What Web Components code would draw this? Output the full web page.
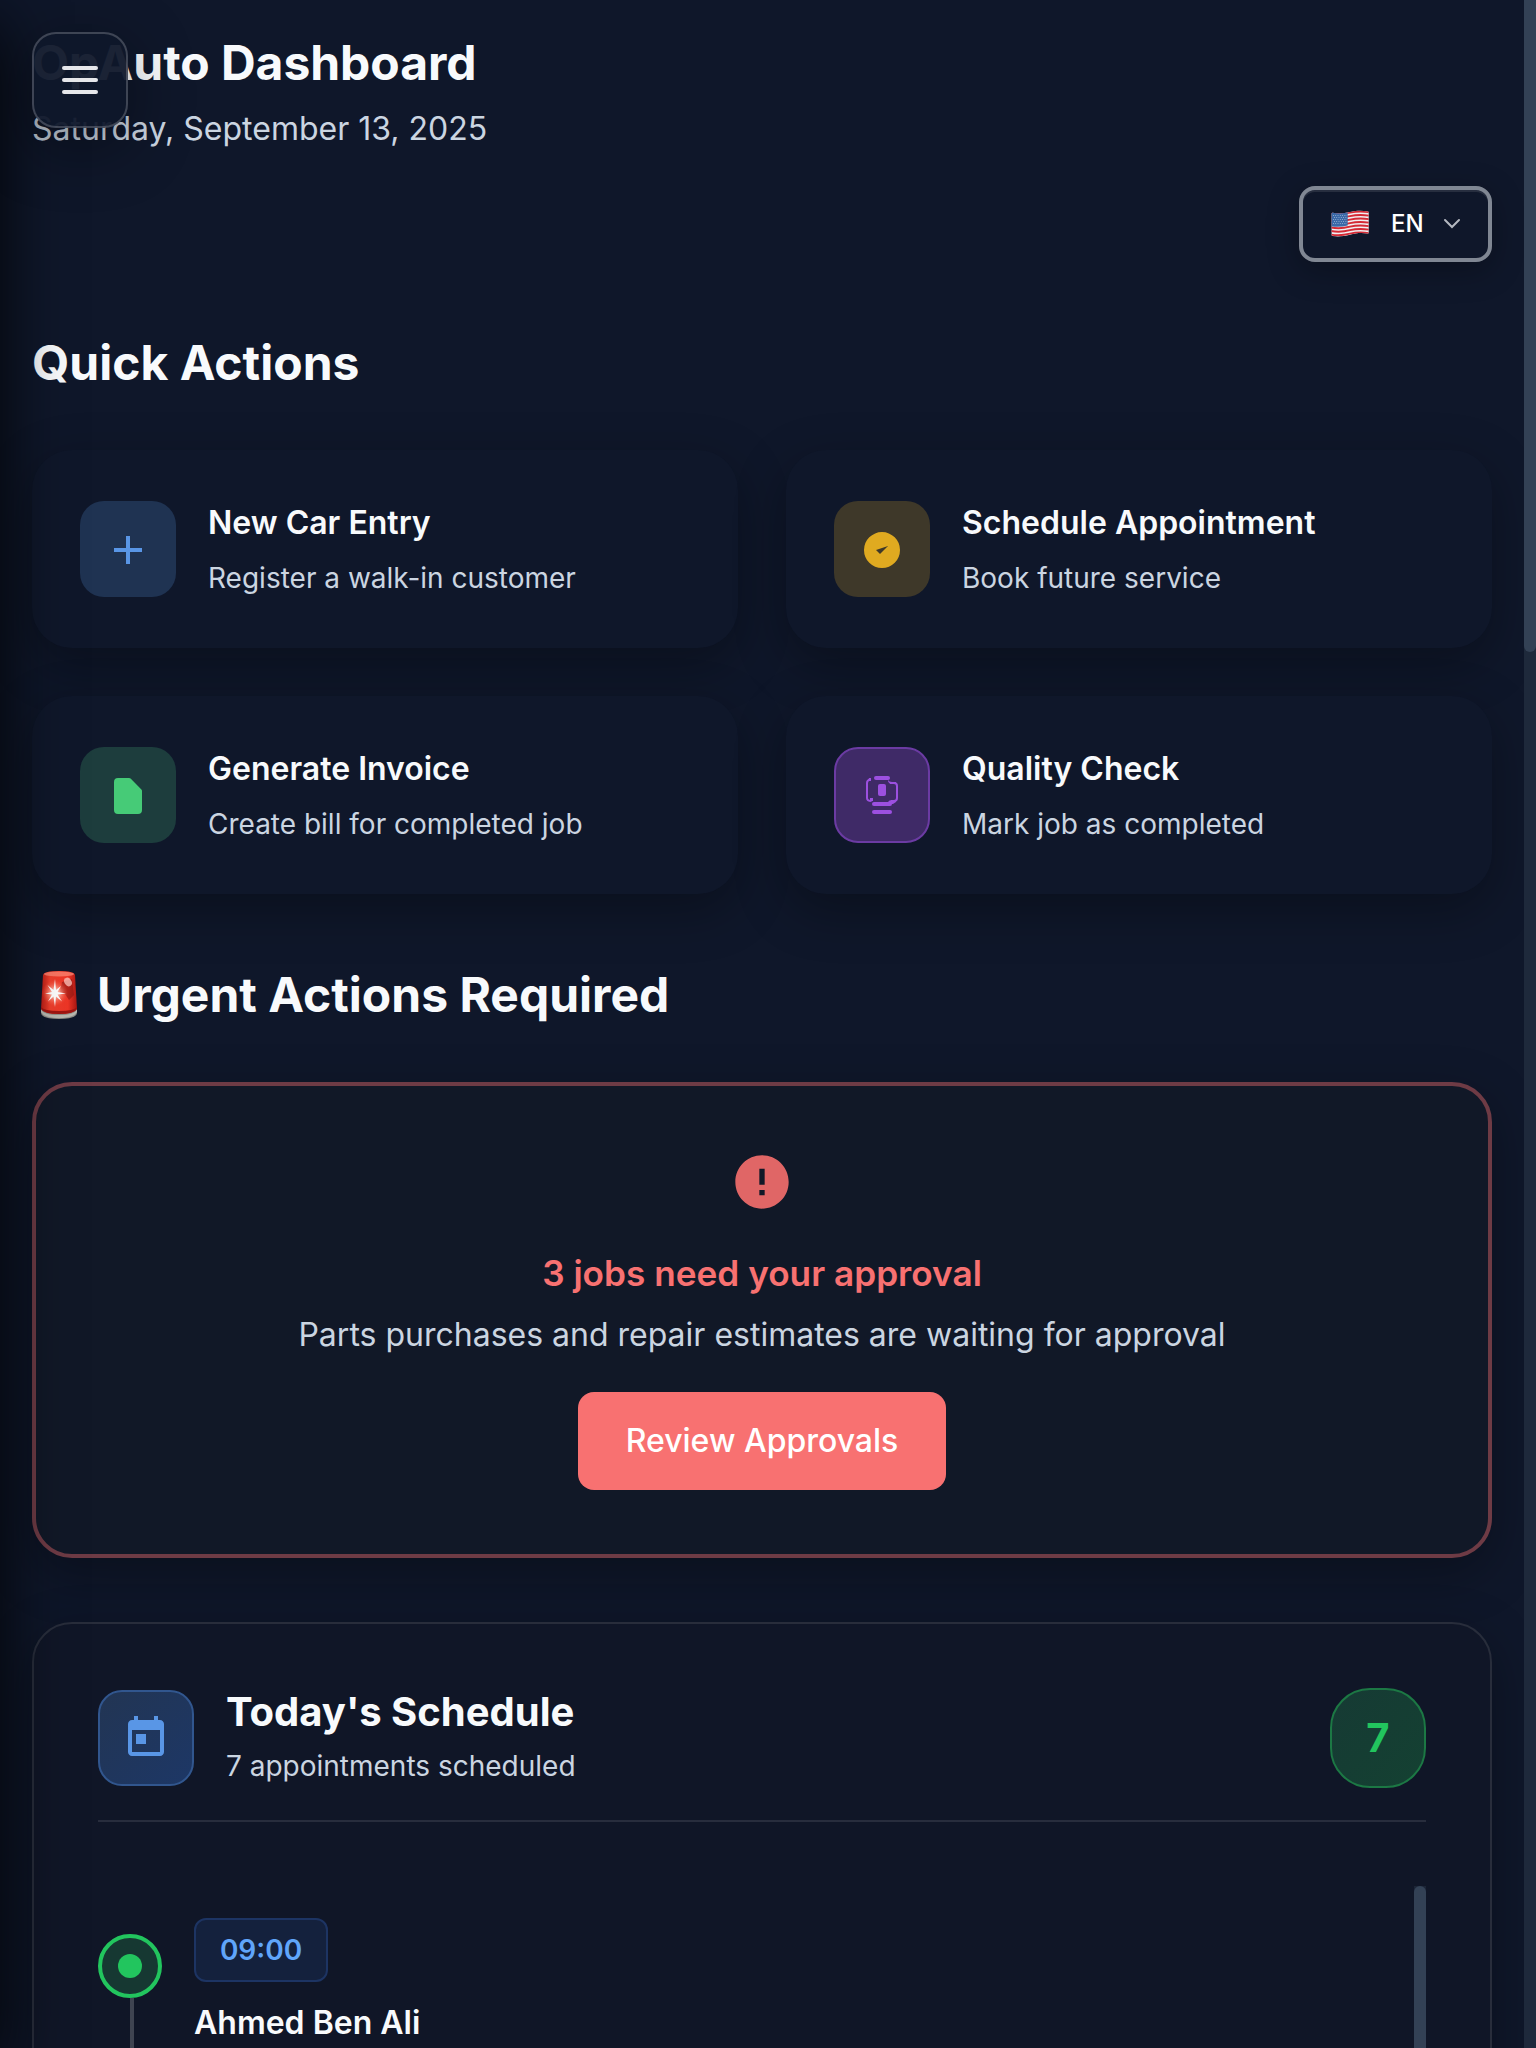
<!DOCTYPE html>
<html lang="en"><head><meta charset="utf-8"><title>OpAuto Dashboard</title>
<style>html,body{margin:0;height:2048px;overflow:hidden;background:#0f172a}body{font-family:Inter,sans-serif;color:#f8fafc}</style></head>
<body>
<op-app></op-app>
<script>
const define=(name,html)=>customElements.define(name,class extends HTMLElement{
  constructor(){super();this.attachShadow({mode:'open'}).innerHTML=html;}
});
define('op-scrollbar',`<style>:host{display:block;width:12px;background:var(--track,#1e293b);flex:none}
div{height:var(--thumb,652px);background:#334155;border-radius:var(--r,0 0 6px 6px)}</style><div></div>`);
define('op-drawer-edge',`<style>:host{display:block;position:absolute;left:-560px;top:0;width:560px;height:2048px;box-shadow:0 24px 62px rgba(0,0,0,.86);z-index:3;pointer-events:none}</style>`);
define('op-menu-button',`<style>:host{position:absolute;left:32px;top:32px;z-index:4;box-sizing:border-box;width:96px;height:96px;border:2px solid rgba(255,255,255,.2);border-radius:24px;background:rgba(15,23,42,.95);box-shadow:0 16px 64px rgba(0,0,0,.4);display:flex;flex-direction:column;gap:8px;align-items:center;justify-content:center}
i{display:block;width:36px;height:4px;border-radius:2px;background:#e6e7ea}</style><i></i><i></i><i></i>`);
define('op-heading',`<style>:host{display:block;font-size:48px;line-height:60px;font-weight:700;white-space:nowrap}</style><slot></slot>`);
define('op-language',`<style>:host{box-sizing:border-box;width:193px;height:76px;border:4px solid #808793;border-radius:16px;background:#0f172a;display:flex;align-items:center;padding-left:28px;box-shadow:0 8px 32px rgba(0,0,0,.3),inset 0 2px 0 rgba(255,255,255,.1);font-size:24px;font-weight:500;line-height:36px}
.flag{width:38px;height:28px;flex:none}span{margin-left:22px;width:33px;color:#fff}.c{margin-left:19px;width:18px;height:12px}</style>
<svg class="flag" viewBox="0 0 38 28"><defs><clipPath id="w"><path d="M.6 3.6Q.6 2.6 1.6 2.7C8 4 13 3.500 19 2 26 .2 31 .4 37 1.400Q37.700 1.600 37.700 2.400V22.800Q37.700 23.700 36.800 23.500C30 22.400 25 23 19 24.800 13 26.300 7 26.800 1.500 26Q.6 25.800.6 25Z"/></clipPath></defs>
<g clip-path="url(#w)"><rect width="38" height="28" fill="#f1eef0"/><g fill="none" stroke="#d42a35" stroke-width="1.900"><path d="M0 3.300C8 5 13 4.200 19 2.700S31 1 38 2.100"/><path d="M0 6.900C8 8.500 13 7.700 19 6.200S31 4.600 38 5.600M0 10.500C8 12 13 11.200 19 9.700S31 8.100 38 9.100M0 14C8 15.500 13 14.700 19 13.200S31 11.600 38 12.600M0 17.500C8 19 13 18.200 19 16.700S31 15.100 38 16.100M0 21C8 22.500 13 21.700 19 20.200S31 18.600 38 19.600M0 24.600C8 26 13 25.200 19 23.700S31 22.100 38 23.100"/></g><path d="M0 0H16.700V15.500C11 16.800 6 17.200 0 16.200Z" fill="#3a69a8"/><g stroke="#c9d8ea" stroke-width=".7" stroke-dasharray=".8 1.500"><path d="M2 5.500H16M3 7.500H16M2 9.500H16M3 11.500H16M2 13.500H16"/></g></g></svg>
<span>EN</span><svg class="c" viewBox="0 0 18 12"><path d="M2 2l7 7 7-7" fill="none" stroke="#b4b8c0" stroke-width="2" stroke-linecap="round"/></svg>`);
define('op-action',`<style>:host{box-sizing:border-box;height:198px;padding:0 48px;border-radius:40px;background:#0f172a;display:flex;align-items:center;gap:32px;box-shadow:0 16px 52px rgba(0,0,0,.31)}
.i{box-sizing:border-box;width:96px;height:96px;border-radius:24px;background:var(--bg);border:2px solid var(--bd,transparent);background-clip:border-box;display:flex;align-items:center;justify-content:center;padding-top:2px;color:var(--fg);flex:none}
.t{font-size:32px;line-height:46px;font-weight:600}.d{font-size:28px;line-height:40px;color:#cbd5e1;margin-top:12px}</style>
<div class="i"><slot name="icon"></slot></div><div><div class="t"><slot name="title"></slot></div><div class="d"><slot></slot></div></div>`);
define('op-alert',`<style>:host{box-sizing:border-box;display:flex;flex-direction:column;align-items:center;height:476px;padding-top:64px;border:4px solid #6e3b45;border-radius:40px;background:#111827;box-shadow:0 16px 52px rgba(0,0,0,.31)}
svg{width:64px;height:64px;fill:#e06666}h3{margin:33.6px 0 0;font-size:35.200px;line-height:50px;font-weight:600;color:#f87171}p{margin:13.600px 0 0;font-size:32px;line-height:48px;color:#cbd5e1}
button{margin:32.800px 0 0;border:0;font:500 32px/48px Inter,sans-serif;color:#fff;background:#f87171;border-radius:16px;width:368px;height:98px;padding:0}</style>
<svg viewBox="0 0 24 24"><path d="M12 2C6.480 2 2 6.480 2 12s4.480 10 10 10 10-4.480 10-10S17.520 2 12 2zm1 15h-2v-2h2v2zm0-4h-2V7h2v6z"/></svg>
<h3><slot name="title"></slot></h3><p><slot></slot></p><button><slot name="action"></slot></button>`);
define('op-visit',`<style>:host{display:flex;gap:32px;padding-top:32px;flex:1}
.rail{width:64px;margin-top:16px;flex:none;display:flex;flex-direction:column}
.dot{box-sizing:border-box;width:64px;height:64px;border:4px solid #22c55e;border-radius:50%;background:#163832;display:flex;align-items:center;justify-content:center}.dot i{width:24px;height:24px;border-radius:50%;background:#22c55e}
.line{width:4px;margin-left:32px;flex:1;min-height:100px;background:#3f4451}
.chip{box-sizing:border-box;width:134px;height:64px;border:2px solid #1d3463;border-radius:12px;background:#14213d;color:#60a5fa;font-size:28px;font-weight:600;line-height:61px;text-align:center}
.n{font-size:32px;line-height:40px;font-weight:600;margin-top:21px}</style>
<div class="rail"><div class="dot"><i></i></div><div class="line"></div></div><div><div class="chip"><slot name="time"></slot></div><div class="n"><slot></slot></div></div>`);
define('op-schedule',`<style>:host{box-sizing:border-box;display:flex;flex-direction:column;height:640px;padding:64px 64px 0;border:2px solid #282d3b;border-radius:40px;background:#101627;box-shadow:0 16px 52px rgba(0,0,0,.31)}
header{display:flex;align-items:center;gap:32px;height:100px;padding-bottom:32px;border-bottom:2px solid #282d3d;flex:none}
.i{box-sizing:border-box;width:96px;height:96px;border:2px solid #31568e;border-radius:24px;background:linear-gradient(135deg,#223553,#1d3766);display:flex;align-items:center;justify-content:center}
svg{width:48px;height:48px;fill:#5996e6}.x{flex:1;height:100px}.t{font-size:40px;line-height:48px;font-weight:700}.s{font-size:28px;line-height:42px;margin-top:9px;color:#cbd5e1}
.b{box-sizing:border-box;width:96px;height:100px;border:2px solid #1c7844;border-radius:40px;background:linear-gradient(135deg,#163a34,#144132);color:#22c55e;font-size:40px;font-weight:700;line-height:96px;text-align:center}
.list{display:flex;margin-top:64px;height:400px}op-scrollbar{--track:#1b2436;--thumb:600px;--r:6px}</style>
<header><div class="i"><svg viewBox="0 0 24 24"><path d="M19 3h-1V1h-2v2H8V1H6v2H5c-1.110 0-1.990.9-1.990 2L3 19c0 1.100.89 2 2 2h14c1.100 0 2-.9 2-2V5c0-1.100-.9-2-2-2zm0 16H5V8h14v11zM7 10h5v5H7z"/></svg></div>
<div class="x"><div class="t"><slot name="title"></slot></div><div class="s"><slot name="sub"></slot></div></div><div class="b"><slot name="count"></slot></div></header>
<div class="list"><slot></slot><op-scrollbar></op-scrollbar></div>`);
define('op-app',`<style>:host{display:flex;position:relative;height:2048px;overflow:hidden}
main{flex:1;padding:33px 32px 0;display:flex;flex-direction:column;min-width:0}
.date{font-size:32px;line-height:48px;margin-top:12px;color:#cbd5e1}
.tools{display:flex;justify-content:flex-end;margin-top:33px}
.grid{display:grid;grid-template-columns:1fr 1fr;gap:48px;margin-top:57.500px}
.q{margin-top:70.500px}.u{margin-top:70.500px;display:flex;align-items:center}.u svg{width:44px;height:60px;margin:0 16px 0 5px}
op-alert{margin-top:57.500px;flex:none}op-schedule{margin-top:64px;flex:none}
.ic{width:48px;height:48px;fill:currentColor;display:block}</style>
<main>
<op-heading style="letter-spacing:-.04px">OpAuto Dashboard</op-heading><div class="date">Saturday, September 13, 2025</div>
<div class="tools"><op-language></op-language></div>
<op-heading class="q">Quick Actions</op-heading>
<div class="grid">
<op-action style="--bg:#1f3352;--fg:#5996e6"><svg slot="icon" class="ic" viewBox="0 0 24 24"><path d="M19 13h-6v6h-2v-6H5v-2h6V5h2v6h6v2z"/></svg><span slot="title">New Car Entry</span><span>Register a walk-in customer</span></op-action>
<op-action style="--bg:#3e3829;--fg:#e0aa20"><svg slot="icon" class="ic" viewBox="0 0 24 24"><path fill-rule="evenodd" d="M9 12l2 2 4-4zM21 12a9 9 0 1 1-18 0 9 9 0 0 1 18 0z"/></svg><span slot="title">Schedule Appointment</span><span>Book future service</span></op-action>
<op-action style="--bg:#1d3d3d;--fg:#46cb77"><svg slot="icon" class="ic" viewBox="0 0 24 24"><path d="M17 21H7a2 2 0 0 1-2-2V5a2 2 0 0 1 2-2h5.586a1 1 0 0 1 .707.293l5.414 5.414a1 1 0 0 1 .293.707V19a2 2 0 0 1-2 2z"/></svg><span slot="title">Generate Invoice</span><span>Create bill for completed job</span></op-action>
<op-action style="--bg:#3f2a67;--bd:#6b3ba3;--fg:#9c50e0"><svg slot="icon" class="ic" viewBox="0 0 48 48"><rect x="16" y="4" width="16" height="4" rx="2"/><rect x="20" y="12" width="8" height="12" rx="2"/><rect x="14" y="30" width="20" height="4" rx="2"/><rect x="14" y="38" width="20" height="4" rx="2"/><path d="M12.500 7.500Q9 8 9 11v15q0 3 4.500 3" fill="none" stroke="currentColor" stroke-width="2"/><path d="M11 6h2v3h-3zM12 26h3v3h-3zM30 8q1 2 4 2h4v2h-5q-3-1-3-4zM30 30q1-2 4-2h4v2l-3 2h-5z"/><path d="M32 11h4q3 0 3 3v12q0 3-3 3h-3" fill="none" stroke="currentColor" stroke-width="2"/></svg><span slot="title">Quality Check</span><span>Mark job as completed</span></op-action>
</div>
<div class="u"><svg viewBox="0 0 44 60"><defs><linearGradient id="r"><stop offset="0" stop-color="#b81c15"/><stop offset=".25" stop-color="#f0402d"/><stop offset=".75" stop-color="#ee3526"/><stop offset="1" stop-color="#a81713"/></linearGradient><radialGradient id="g"><stop offset="0" stop-color="#fff"/><stop offset=".35" stop-color="#ffb8a8" stop-opacity=".8"/><stop offset="1" stop-color="#ff5a44" stop-opacity="0"/></radialGradient></defs>
<path d="M4 44v4q1 6 18 6t18-6v-4z" fill="#8f8e88"/><path d="M4 44q2 6 18 6t18-6v3q-3 6-18 6T4 47z" fill="#b9b8b0"/><path d="M6 10Q7 6 22 6t16 4l2 34q-3 5-18 5T4 44z" fill="url(#r)"/><ellipse cx="22" cy="9" rx="15" ry="2.500" fill="#ff8e7a" opacity=".7"/><path d="M4 42q3 4 18 4t18-4v2q-3 5-18 5T4 44z" fill="#9e1511"/><path d="M25 17l10-3 2 16-5 5-4-6-5-2z" fill="#8f1713" opacity=".6"/><ellipse cx="31" cy="17" rx="3.500" ry="4.500" fill="#ffc9c2" opacity=".75" transform="rotate(-35 31 17)"/><circle cx="18" cy="28" r="13" fill="url(#g)"/><path d="M18 14l1 11 5-4-3.500 6 8.500 1.500-8.500 1 4.500 7-6-5-1 10.500-1.500-10.500-5.500 5 4-7-7-1 7-1.500-4.500-7 6 5z" fill="#fff"/></svg><op-heading>Urgent Actions Required</op-heading></div>
<op-alert><span slot="title">3 jobs need your approval</span><span>Parts purchases and repair estimates are waiting for approval</span><span slot="action">Review Approvals</span></op-alert>
<op-schedule><span slot="title">Today's Schedule</span><span slot="sub">7 appointments scheduled</span><span slot="count">7</span><op-visit><span slot="time">09:00</span><span>Ahmed Ben Ali</span></op-visit></op-schedule>
</main><op-scrollbar></op-scrollbar><op-drawer-edge></op-drawer-edge><op-menu-button></op-menu-button>`);
</script></body></html>
